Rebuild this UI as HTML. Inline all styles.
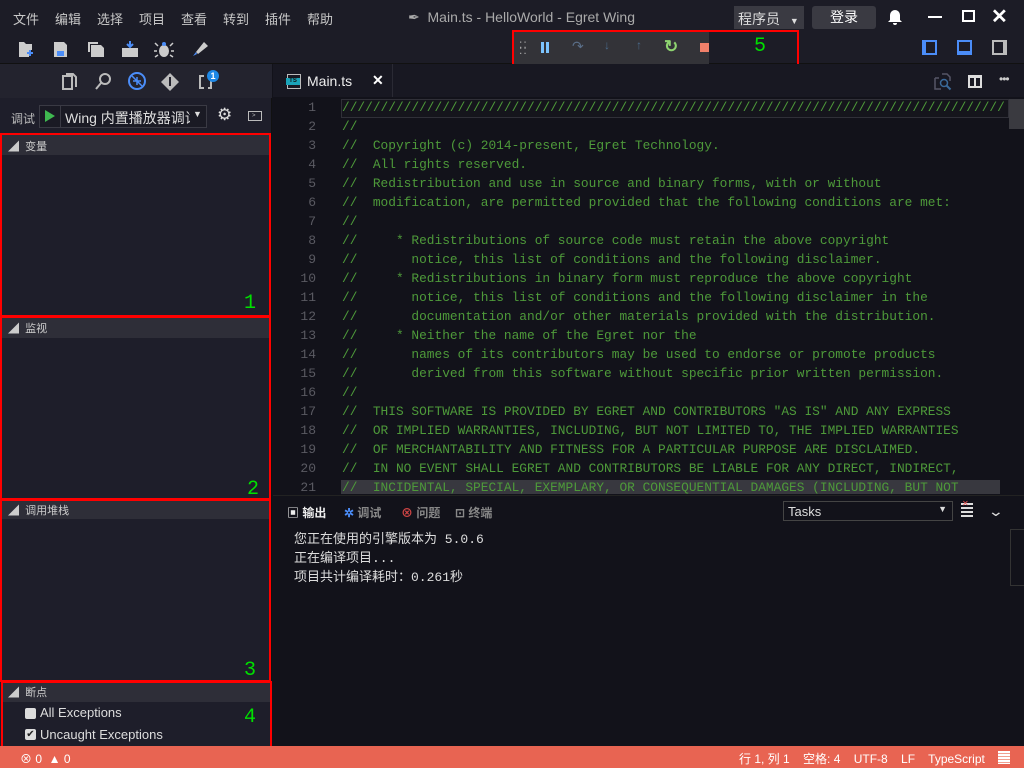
<!DOCTYPE html>
<html><head><meta charset="utf-8"><style>
*{margin:0;padding:0;box-sizing:border-box}
body{width:1024px;height:768px;overflow:hidden;background:#12121a;font-family:"Liberation Sans","Noto Sans CJK SC",sans-serif;color:#ccc;position:relative}
.a{position:absolute}
.mono{font-family:"Liberation Mono","Noto Sans CJK SC",monospace}
.red{border:2px solid #f00}
.g{color:#00e000;font-family:"Liberation Mono",monospace;font-size:20px}
.code div{height:19px;line-height:19px;white-space:pre}
.ln div{height:19px;line-height:19px;text-align:right}
.menu span{display:inline-block;width:42px}
</style></head><body>
<!-- title bar -->
<div class="a" style="left:0;top:0;width:1024px;height:34px;background:#1c1c26"></div>
<div class="a menu" style="left:13px;top:9px;font-size:13px;color:#c8c8c8;white-space:nowrap">
<span>文件</span><span>编辑</span><span>选择</span><span>项目</span><span>查看</span><span>转到</span><span>插件</span><span>帮助</span></div>
<div class="a" style="left:408px;top:9px;font-size:14px;color:#aaa">&#x2712;&nbsp; Main.ts - HelloWorld - Egret Wing</div>
<div class="a" style="left:734px;top:6px;width:70px;height:23px;background:#3a3a42;font-size:14px;color:#ddd;padding:3px 0 0 4px">程序员 <span style="font-size:9px;margin-left:6px">▼</span></div>
<div class="a" style="left:812px;top:6px;width:64px;height:23px;background:#3a3a42;border-radius:3px;font-size:14px;color:#fff;text-align:center;line-height:23px">登录</div>
<svg class="a" style="left:886px;top:8px" width="18" height="18"><path d="M9 2a5 5 0 0 0-5 5v5l-2 2h14l-2-2V7a5 5 0 0 0-5-5zM7 15a2 2 0 0 0 4 0z" fill="#fff"/></svg>
<div class="a" style="left:928px;top:16px;width:14px;height:2px;background:#fff"></div>
<div class="a" style="left:962px;top:10px;width:13px;height:12px;border:2px solid #fff"></div>
<div class="a" style="left:991px;top:4px;font-size:20px;color:#fff;font-weight:bold">✕</div>
<!-- toolbar -->
<div class="a" style="left:0;top:34px;width:1024px;height:30px;background:#1c1c26;border-bottom:1px solid #111"></div>
<svg class="a" style="left:18px;top:40px" width="200" height="18">
<path d="M1 2h5l2 2h6v6h-3v7H1z" fill="#ccc"/><path d="M12 10v6M9 13h6" stroke="#4b8df8" stroke-width="2"/>
<path d="M36 2h10l3 3v12H36z" fill="#ccc"/><rect x="39" y="11" width="7" height="5" fill="#4b8df8"/>
<path d="M70 2h10v2H72v8h-2zM73 5h10l3 3v9H73z" fill="#ccc"/>
<path d="M104 8h16v9h-16z" fill="#ccc"/><path d="M112 1v6M109 4l3 3 3-3" stroke="#4b8df8" stroke-width="2" fill="none"/>
<ellipse cx="146" cy="11" rx="5" ry="6" fill="#ccc"/><path d="M140 6l-3-3M152 6l3-3M139 11h-3M153 11h3M140 15l-3 2M152 15l3 2" stroke="#ccc" stroke-width="1.5"/><circle cx="146" cy="4" r="2" fill="#4b8df8"/>
<path d="M186 2l-8 10 2 2 10-8z" fill="#ccc"/><path d="M178 12l-3 4 4-2z" fill="#4b8df8"/>
</svg>
<!-- debug toolbar 5 -->
<div class="a" style="left:514px;top:32px;width:195px;height:32px;background:#333338"></div>
<div class="a red" style="left:512px;top:30px;width:287px;height:37px"></div>
<div class="a" style="left:519px;top:41px;font-size:12px;color:#aaa;line-height:6px;letter-spacing:1px">::<br>::</div>
<div class="a" style="left:541px;top:42px;width:3px;height:11px;background:#7cc4ff"></div>
<div class="a" style="left:546px;top:42px;width:3px;height:11px;background:#7cc4ff"></div>
<div class="a" style="left:572px;top:38px;color:#5a6e88;font-size:14px">↷</div>
<div class="a" style="left:604px;top:38px;color:#4a6a8a;font-size:12px">↓</div>
<div class="a" style="left:636px;top:38px;color:#4a6a8a;font-size:12px">↑</div>
<div class="a" style="left:664px;top:37px;color:#8ed470;font-size:17px;font-weight:bold">↻</div>
<div class="a" style="left:700px;top:43px;width:9px;height:9px;background:#f0806a"></div>
<div class="a g" style="left:754px;top:35px">5</div>
<div class="a" style="left:922px;top:40px;width:15px;height:15px;border:2px solid #4b8df8;border-left-width:4px"></div>
<div class="a" style="left:957px;top:40px;width:15px;height:15px;border:2px solid #4b8df8;border-bottom-width:4px"></div>
<div class="a" style="left:992px;top:40px;width:15px;height:15px;border:2px solid #bbb;border-right-width:4px"></div>
<!-- sidebar -->
<div class="a" style="left:0;top:64px;width:272px;height:682px;background:#1e1e2a;border-right:1px solid #111"></div>
<div class="a" style="left:0;top:64px;width:272px;height:34px;background:#23232e"></div>
<svg class="a" style="left:60px;top:72px" width="160" height="20">
<rect x="3" y="4" width="9" height="13" fill="none" stroke="#bbb" stroke-width="2"/><path d="M6 2h7l3 3v10" fill="none" stroke="#bbb" stroke-width="2"/>
<circle cx="45" cy="7" r="5" fill="none" stroke="#bbb" stroke-width="2"/><path d="M41 11l-5 6" stroke="#bbb" stroke-width="2"/>
<circle cx="77" cy="9" r="8" fill="none" stroke="#4b8df8" stroke-width="2"/><path d="M72 4l10 10M77 5v8M73 9h8" stroke="#4b8df8" stroke-width="1.5"/>
<path d="M110 1l9 9-9 9-9-9z" fill="#bbb"/><path d="M110 5v9" stroke="#23232e" stroke-width="2"/>
<path d="M139 3h5v2h-3v10h3v2h-5zM152 3h-4v2h2v10h-2v2h4z" fill="#bbb"/>
</svg>
<div class="a" style="left:207px;top:70px;width:12px;height:12px;border-radius:6px;background:#1e88e5;color:#fff;font-size:9px;text-align:center;line-height:12px;font-weight:bold">1</div>
<div class="a" style="left:11px;top:110px;font-size:12px;color:#bbb">调试</div>
<div class="a" style="left:39px;top:105px;width:168px;height:23px;border:1px solid #3a3a44;background:#1a1a24"></div>
<div class="a" style="left:60px;top:105px;width:1px;height:23px;background:#3a3a44"></div>
<div class="a" style="left:45px;top:110px;width:0;height:0;border-left:10px solid #3fb950;border-top:6px solid transparent;border-bottom:6px solid transparent"></div>
<div class="a" style="left:65px;top:108px;font-size:14px;color:#ddd;width:125px;overflow:hidden;white-space:nowrap">Wing 内置播放器调试</div>
<div class="a" style="left:193px;top:109px;font-size:9px;color:#ddd">▼</div>
<div class="a" style="left:217px;top:105px;font-size:17px;color:#ddd">⚙</div>
<div class="a" style="left:248px;top:111px;width:14px;height:10px;border:1px solid #bbb;font-size:6px;line-height:8px;padding-left:3px;color:#bbb">&gt;</div>
<!-- sections -->
<div class="a" style="left:2px;top:135px;width:268px;height:20px;background:#2e2e38"></div>
<div class="a" style="left:8px;top:138px;font-size:11px;color:#ccc">◢&nbsp; 变量</div>
<div class="a red" style="left:0;top:133px;width:271px;height:184px"></div>
<div class="a g" style="left:244px;top:292px">1</div>
<div class="a" style="left:2px;top:318px;width:268px;height:20px;background:#2e2e38"></div>
<div class="a" style="left:8px;top:320px;font-size:11px;color:#ccc">◢&nbsp; 监视</div>
<div class="a red" style="left:0;top:316px;width:271px;height:184px"></div>
<div class="a g" style="left:247px;top:478px">2</div>
<div class="a" style="left:2px;top:501px;width:268px;height:18px;background:#2e2e38"></div>
<div class="a" style="left:8px;top:502px;font-size:11px;color:#ccc">◢&nbsp; 调用堆栈</div>
<div class="a red" style="left:0;top:499px;width:271px;height:183px"></div>
<div class="a g" style="left:244px;top:659px">3</div>
<div class="a" style="left:2px;top:683px;width:268px;height:19px;background:#2e2e38"></div>
<div class="a" style="left:8px;top:684px;font-size:11px;color:#ccc">◢&nbsp; 断点</div>
<div class="a red" style="left:1px;top:681px;width:271px;height:67px"></div>
<div class="a" style="left:25px;top:708px;width:11px;height:11px;background:#ddd;border-radius:2px"></div>
<div class="a" style="left:40px;top:705px;font-size:13px;color:#ddd">All Exceptions</div>
<div class="a" style="left:25px;top:729px;width:11px;height:11px;background:#ddd;border-radius:2px;font-size:10px;color:#222;line-height:11px;text-align:center">✔</div>
<div class="a" style="left:40px;top:727px;font-size:13px;color:#ddd">Uncaught Exceptions</div>
<div class="a g" style="left:244px;top:706px">4</div>
<!-- tabs -->
<div class="a" style="left:273px;top:64px;width:751px;height:33px;background:#181822"></div>
<div class="a" style="left:273px;top:64px;width:120px;height:33px;background:#181822;border-right:1px solid #2a2a34"></div>
<div class="a" style="left:287px;top:74px;width:14px;height:15px;border:1px solid #bbb;background:#181822"></div>
<div class="a" style="left:286px;top:78px;width:14px;height:7px;background:#1aa3b8;color:#111;font-size:6px;font-weight:bold;text-align:center;line-height:7px">TS</div>
<div class="a" style="left:307px;top:73px;font-size:14px;color:#eee">Main.ts</div>
<div class="a" style="left:372px;top:72px;font-size:14px;color:#fff;font-weight:bold">✕</div>
<svg class="a" style="left:934px;top:73px" width="18" height="18"><path d="M1 5h4M1 5v11h6M8 1h5l3 3v4" stroke="#556" stroke-width="1.5" fill="none"/><circle cx="10" cy="10" r="3.5" stroke="#3a6a9a" stroke-width="1.5" fill="none"/><path d="M12.5 12.5l4 4" stroke="#3a6a9a" stroke-width="2"/></svg>
<div class="a" style="left:968px;top:75px;width:14px;height:13px;border:2px solid #ddd;border-top-width:3px"></div>
<div class="a" style="left:974px;top:76px;width:2px;height:11px;background:#ddd"></div>
<div class="a" style="left:999px;top:72px;font-size:12px;color:#ccc;letter-spacing:-1px">•••</div>
<!-- editor -->
<div class="a" style="left:341px;top:99px;width:668px;height:19px;border:1px solid #303038;background:#15151c"></div>
<div class="a" style="left:341px;top:480px;width:659px;height:14px;background:#38383f"></div>
<div class="a" style="left:1009px;top:99px;width:15px;height:30px;background:#3a3a40"></div>
<div class="a mono ln" style="left:290px;top:98px;width:26px;font-size:13px;color:#5a5a62;height:396px;overflow:hidden">
<div>1</div><div>2</div><div>3</div><div>4</div><div>5</div><div>6</div><div>7</div><div>8</div><div>9</div><div>10</div><div>11</div><div>12</div><div>13</div><div>14</div><div>15</div><div>16</div><div>17</div><div>18</div><div>19</div><div>20</div><div>21</div></div>
<div class="a mono code" style="left:342px;top:98px;font-size:12.85px;color:#4e9a3a;height:396px;overflow:hidden;width:664px">
<div>//////////////////////////////////////////////////////////////////////////////////////</div>
<div>//</div>
<div>//  Copyright (c) 2014-present, Egret Technology.</div>
<div>//  All rights reserved.</div>
<div>//  Redistribution and use in source and binary forms, with or without</div>
<div>//  modification, are permitted provided that the following conditions are met:</div>
<div>//</div>
<div>//     * Redistributions of source code must retain the above copyright</div>
<div>//       notice, this list of conditions and the following disclaimer.</div>
<div>//     * Redistributions in binary form must reproduce the above copyright</div>
<div>//       notice, this list of conditions and the following disclaimer in the</div>
<div>//       documentation and/or other materials provided with the distribution.</div>
<div>//     * Neither the name of the Egret nor the</div>
<div>//       names of its contributors may be used to endorse or promote products</div>
<div>//       derived from this software without specific prior written permission.</div>
<div>//</div>
<div>//  THIS SOFTWARE IS PROVIDED BY EGRET AND CONTRIBUTORS "AS IS" AND ANY EXPRESS</div>
<div>//  OR IMPLIED WARRANTIES, INCLUDING, BUT NOT LIMITED TO, THE IMPLIED WARRANTIES</div>
<div>//  OF MERCHANTABILITY AND FITNESS FOR A PARTICULAR PURPOSE ARE DISCLAIMED.</div>
<div>//  IN NO EVENT SHALL EGRET AND CONTRIBUTORS BE LIABLE FOR ANY DIRECT, INDIRECT,</div>
<div>//  INCIDENTAL, SPECIAL, EXEMPLARY, OR CONSEQUENTIAL DAMAGES (INCLUDING, BUT NOT</div>
</div>
<!-- panel -->
<div class="a" style="left:273px;top:495px;width:751px;height:251px;background:#12121a;border-top:1px solid #222"></div>
<div class="a" style="left:287px;top:504px;font-size:12px;color:#eee;font-weight:bold">▣ 输出</div>
<div class="a" style="left:344px;top:504px;font-size:12px;color:#888;font-weight:bold"><span style="color:#4b8df8">✲</span> 调试</div>
<div class="a" style="left:401px;top:504px;font-size:12px;color:#888;font-weight:bold"><span style="color:#c44">⊗</span> 问题</div>
<div class="a" style="left:455px;top:504px;font-size:12px;color:#888;font-weight:bold">⊡ 终端</div>
<div class="a" style="left:783px;top:501px;width:170px;height:20px;border:1px solid #444;background:#12121a;font-size:13px;color:#ddd;padding:2px 4px">Tasks<span class="a" style="right:5px;top:2px;font-size:9px">▼</span></div>
<div class="a" style="left:961px;top:503px;width:12px;height:14px;background:repeating-linear-gradient(#ddd 0 2px,transparent 2px 4px)"></div>
<div class="a" style="left:962px;top:499px;font-size:8px;color:#e55">✕</div>
<div class="a" style="left:990px;top:503px;font-size:14px;color:#ddd;transform:scaleX(1.4)">⌄</div>
<div class="a" style="left:1010px;top:529px;width:14px;height:57px;border:1px solid #333;border-right:none"></div>
<div class="a mono" style="left:294px;top:530px;font-size:13px;color:#ddd;line-height:19px">您正在使用的引擎版本为 5.0.6<br>正在编译项目...<br>项目共计编译耗时：0.261秒</div>
<!-- status -->
<div class="a" style="left:0;top:746px;width:1024px;height:22px;background:#e86452;font-size:12px;color:#fff"></div>
<div class="a" style="left:20px;top:750px;font-size:12px;color:#fff">⊗ 0 &nbsp;▲ 0</div>
<div class="a" style="left:739px;top:750px;font-size:12px;color:#fff;word-spacing:0;white-space:nowrap">行 1, 列 1 &nbsp;&nbsp; 空格: 4 &nbsp;&nbsp; UTF-8 &nbsp;&nbsp; LF &nbsp;&nbsp; TypeScript</div>
<div class="a" style="left:998px;top:751px;width:12px;height:13px;background:repeating-linear-gradient(#fff 0 2px,#f0a090 2px 3px)"></div>
</body></html>
